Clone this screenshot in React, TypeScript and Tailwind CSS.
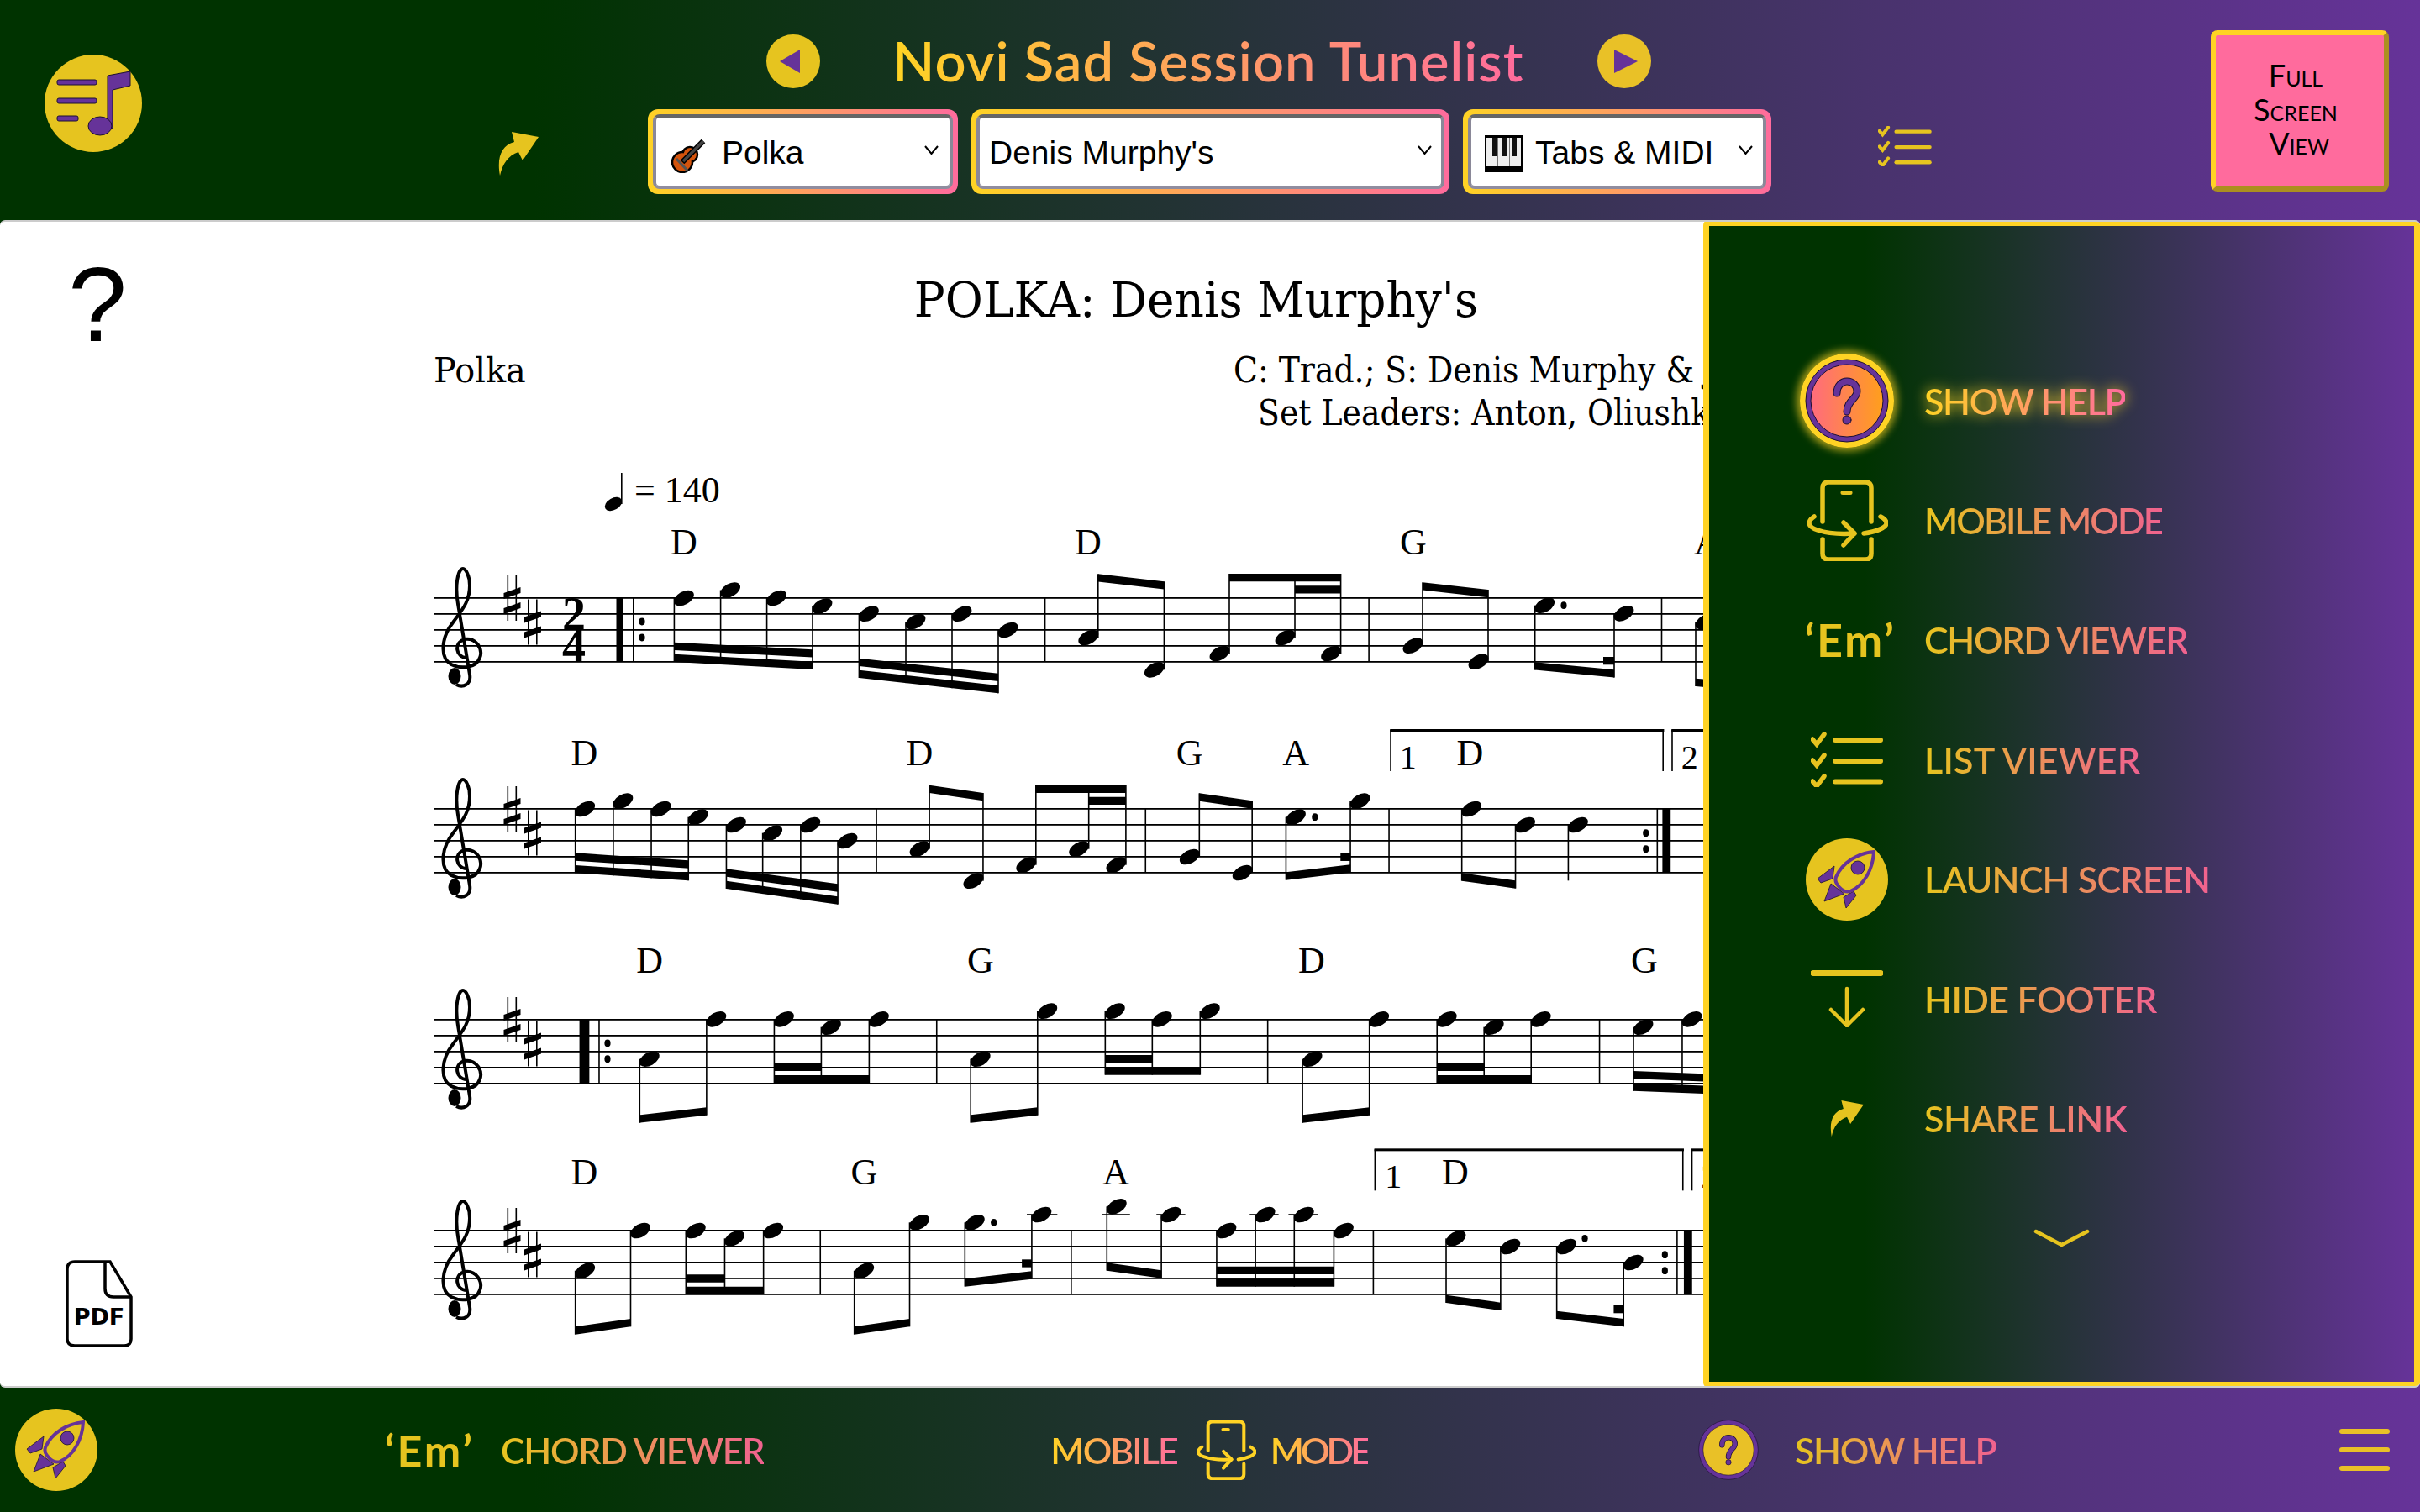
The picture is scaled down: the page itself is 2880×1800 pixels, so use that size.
import { ReactNode } from 'react';

type Group = { up?: boolean; notes: number[][]; beams: number[][]; end?: number };
type Staff = {
  ox: number;
  oy: number;
  sx: number;
  sy: number;
  top: number;
  chordY: number;
  chords: [number, string][];
  bars: number[];
  thick: number[];
  dots: number[][];
  ledgers?: number[][];
  groups: Group[];
  volta?: { y: number; left: number; right: number; next: number; one: number; two: number };
};

const CROP_X = 1 / 1.018;
const CROP_Y = 1 / 3;
const BEAM = 9.3;

const staves: Staff[] = [
  {
    ox: 0, oy: 0, sx: 1, sy: 1, top: 712, chordY: 660,
    chords: [[814, 'D'], [1295, 'D'], [1682, 'G'], [2032, 'A']],
    bars: [753, 1242.8, 1628.3, 1976.7],
    thick: [733.5, 742],
    dots: [[764, 740], [764, 759], [1861, 720.7]],
    groups: [
      { notes: [[802.4, 712], [857.6, 702.5], [912.6, 712], [967, 721.5]], beams: [[802.4, 764.7, 967, 773.3], [802.4, 778.7, 967, 787.7]] },
      { notes: [[1022.4, 730.7], [1078, 740], [1133, 730.7], [1188, 750]], beams: [[1022.4, 783.7, 1188, 801.7], [1022.4, 797.7, 1188, 816]] },
      { up: true, notes: [[1306.8, 759], [1385.4, 797.3]], beams: [[1306.8, 683.3, 1385.4, 692.3]] },
      { up: true, notes: [[1463, 778], [1541, 759], [1595.6, 778]], beams: [[1463, 683, 1595.6, 683], [1541, 697.3, 1595.6, 697.3]] },
      { up: true, notes: [[1693, 768.7], [1771, 787.7]], beams: [[1693, 693.3, 1771, 702]] },
      { notes: [[1826.7, 720.7], [1921, 730.3]], beams: [[1908, 782, 1921, 782], [1826.7, 788.3, 1921, 797.3]] },
      { notes: [[2018, 740]], beams: [[2018, 807.7, 2100, 815]] },
    ],
  },
  {
    ox: 500, oy: 860, sx: CROP_X, sy: CROP_Y, top: 963, chordY: 152,
    chords: [[199, 'D'], [605, 'D'], [932, 'G'], [1061, 'A'], [1272, 'D']],
    bars: [552, 878, 1173, 1498],
    thick: [1505, 1515],
    dots: [[1485, 395], [1485, 452], [1084, 338]],
    volta: { y: 27, left: 1175, right: 1505, next: 1516, one: 1197, two: 1538 },
    groups: [
      { notes: [[188, 309], [234, 281], [280, 309], [325, 338]], beams: [[188, 466, 325, 493], [188, 510, 325, 537]] },
      { notes: [[371, 366], [415, 395], [461, 366], [506, 423]], beams: [[371, 523, 506, 577], [371, 566, 506, 622]] },
      { up: true, notes: [[617, 452], [682, 566]], beams: [[617, 224, 682, 252]] },
      { up: true, notes: [[746, 509], [810, 452], [855, 509]], beams: [[746, 224, 855, 224], [810, 266, 855, 266]] },
      { up: true, notes: [[944, 480], [1008, 537]], beams: [[944, 253, 1008, 280]] },
      { notes: [[1049, 338], [1127, 281]], beams: [[1115, 467, 1127, 467], [1049, 535, 1127, 508]] },
      { notes: [[1262, 309], [1327, 366]], beams: [[1262, 538, 1327, 565]] },
      { notes: [[1391, 366]], beams: [], end: 565 },
    ],
  },
  {
    ox: 500, oy: 1110, sx: CROP_X, sy: CROP_Y, top: 1214, chordY: 145,
    chords: [[278, 'D'], [679, 'G'], [1080, 'D'], [1483, 'G']],
    bars: [216, 625, 1026, 1428],
    thick: [193, 205],
    dots: [[227, 396], [227, 452]],
    groups: [
      { notes: [[266, 452], [347, 310]], beams: [[266, 652, 347, 625]] },
      { notes: [[429, 310], [486, 338], [544, 310]], beams: [[429, 467, 486, 467], [429, 510, 544, 510]] },
      { notes: [[667, 452], [748, 281]], beams: [[667, 652, 748, 625]] },
      { notes: [[830, 281], [887, 310], [945, 281]], beams: [[830, 438, 887, 438], [830, 481, 945, 481]] },
      { notes: [[1069, 452], [1150, 310]], beams: [[1069, 652, 1150, 625]] },
      { notes: [[1232, 310], [1289, 338], [1346, 310]], beams: [[1232, 467, 1289, 467], [1232, 510, 1346, 510]] },
      { notes: [[1470, 338], [1529, 310]], beams: [[1470, 495, 1600, 510], [1470, 538, 1600, 553]] },
    ],
  },
  {
    ox: 500, oy: 1360, sx: CROP_X, sy: CROP_Y, top: 1465, chordY: 150,
    chords: [[199, 'D'], [538, 'G'], [843, 'A'], [1254, 'D']],
    bars: [484, 788, 1154, 1522],
    thick: [1531, 1541],
    dots: [[1508, 401], [1508, 458], [695, 286], [1411, 343]],
    ledgers: [[735, 772, 258], [826, 860, 258], [892, 927, 258], [1005, 1040, 258], [1052, 1088, 258]],
    volta: { y: 25, left: 1156, right: 1529, next: 1540, one: 1179, two: 1562 },
    groups: [
      { notes: [[188, 458], [255, 315]], beams: [[188, 658, 255, 630]] },
      { notes: [[322, 315], [369, 343], [416, 315]], beams: [[322, 472, 369, 472], [322, 515, 416, 515]] },
      { notes: [[526, 458], [593, 286]], beams: [[526, 658, 593, 630]] },
      { notes: [[660, 286], [741, 258]], beams: [[729, 418, 741, 418], [660, 487, 741, 460]] },
      { notes: [[832, 229], [898, 258]], beams: [[832, 430, 898, 457]] },
      { notes: [[965, 315], [1012, 258], [1059, 258], [1107, 315]], beams: [[965, 443, 1107, 443], [965, 487, 1107, 487]] },
      { notes: [[1243, 343], [1309, 372]], beams: [[1243, 545, 1309, 572]] },
      { notes: [[1377, 372], [1458, 429]], beams: [[1446, 582, 1458, 582], [1377, 602, 1458, 630]] },
    ],
  },
];

function Clef({ x, y }: { x: number; y: number }) {
  return (
    <g transform={`translate(${x} ${y})`}>
      <path
        d="M4 14C-8 14-12-4 2-8C16-10 24 4 20 14C16 26-2 28-14 22C-28 14-26-10-12-28C-2-42 8-52 8-72C8-84 3-92 0-92C-6-92-10-72-6-50L8 34C10 46 0 50-8 46"
        fill="none"
        stroke="#000"
        strokeWidth="4"
      />
      <ellipse cx="-10" cy="36" rx="7.5" ry="10" />
    </g>
  );
}

function Sharp({ x, y }: { x: number; y: number }) {
  return (
    <g transform={`translate(${x} ${y})`}>
      <rect x="-6" y="-27" width="1.6" height="54" />
      <rect x="4" y="-27" width="1.6" height="54" />
      <polygon points="-10,-6 10,-13 10,-6 -10,1" />
      <polygon points="-10,12 10,5 10,12 -10,19" />
    </g>
  );
}

function StaffView({ staff }: { staff: Staff }) {
  const X = (n: number) => staff.ox + n * staff.sx;
  const Y = (n: number) => staff.oy + n * staff.sy;
  const { top, volta } = staff;

  return (
    <g>
      {[0, 1, 2, 3, 4].map((i) => (
        <rect key={i} x="516" y={top + i * 19 - 1} width="1520" height="1.8" />
      ))}
      <Clef x={551} y={top + 57} />
      <Sharp x={609.5} y={top} />
      <Sharp x={634} y={top + 28.5} />
      {staff.bars.map((b) => (
        <rect key={b} x={X(b)} y={top} width="1.6" height="76" />
      ))}
      <rect x={X(staff.thick[0])} y={top} width={X(staff.thick[1]) - X(staff.thick[0])} height="76" />
      {staff.dots.map(([x, y], i) => (
        <ellipse key={i} cx={X(x)} cy={Y(y)} rx="3.6" ry="4.4" />
      ))}
      {staff.ledgers?.map(([a, b, y], i) => (
        <rect key={i} x={X(a)} y={Y(y) - 0.8} width={X(b) - X(a)} height="1.6" />
      ))}
      {staff.groups.map((g, gi) => {
        const main = g.up ? g.beams[0] : g.beams[g.beams.length - 1];
        return (
          <g key={gi}>
            {g.beams.map(([x1, y1, x2, y2], i) => (
              <polygon
                key={i}
                points={`${X(x1)},${Y(y1)} ${X(x2)},${Y(y2)} ${X(x2)},${Y(y2) + BEAM} ${X(x1)},${Y(y1) + BEAM}`}
              />
            ))}
            {g.notes.map(([sx, hy], i) => {
              let end = g.end !== undefined ? Y(g.end) : 0;
              if (main) {
                const t = (sx - main[0]) / (main[2] - main[0]);
                end = Y(main[1] + (main[3] - main[1]) * t) + (g.up ? 0 : BEAM);
              }
              const head = Y(hy);
              const hx = X(sx) + (g.up ? -11.5 : 11.5);
              return (
                <g key={i}>
                  <rect x={X(sx) - 0.8} y={Math.min(head, end)} width="1.6" height={Math.abs(end - head)} />
                  <ellipse cx={hx} cy={head} rx="13" ry="7.8" transform={`rotate(-30 ${hx} ${head})`} />
                </g>
              );
            })}
          </g>
        );
      })}
      {staff.chords.map(([x, c], i) => (
        <text key={i} x={X(x)} y={Y(staff.chordY)} textAnchor="middle" fontSize="44">
          {c}
        </text>
      ))}
      {volta && (
        <g>
          <rect x={X(volta.left)} y={Y(volta.y) - 1} width={X(volta.right) - X(volta.left) + 2} height="3" />
          <rect x={X(volta.left)} y={Y(volta.y)} width="1.6" height="49" />
          <rect x={X(volta.right)} y={Y(volta.y)} width="1.6" height="49" />
          <rect x={X(volta.next)} y={Y(volta.y) - 1} width="60" height="3" />
          <rect x={X(volta.next)} y={Y(volta.y)} width="1.6" height="49" />
          <text x={X(volta.one)} y={Y(volta.y) + 46} textAnchor="middle" fontSize="40">1</text>
          <text x={X(volta.two)} y={Y(volta.y) + 46} textAnchor="middle" fontSize="40">2</text>
        </g>
      )}
    </g>
  );
}

function Grad({ children, bright }: { children: ReactNode; bright?: boolean }) {
  return (
    <span
      className={
        bright
          ? 'bg-linear-to-r/srgb from-[#ffd324] to-[#ff6b9d] bg-clip-text text-transparent'
          : 'bg-linear-to-r/srgb from-[#e6c41f] to-[#f0628f] bg-clip-text text-transparent'
      }
    >
      {children}
    </span>
  );
}

function Logo() {
  return (
    <svg viewBox="0 0 116 116" className="w-[116px] h-[116px]">
      <circle cx="58" cy="58" r="58" fill="#e6c41f" />
      <g fill="#663399" stroke="#1d1033" strokeWidth="1">
        <rect x="15" y="30" width="47" height="6" rx="2" />
        <rect x="15" y="52" width="47" height="6" rx="2" />
        <rect x="15" y="73" width="25" height="6" rx="2" />
        <path d="M75 25L102 20V37L81 42V88H75Z" />
        <ellipse cx="66" cy="85" rx="14" ry="11" />
      </g>
    </svg>
  );
}

function ShareIcon({ className }: { className: string }) {
  return (
    <svg viewBox="0 0 48 52" className={className}>
      <path d="M2 52C-2 30 4 16 19 12L16 0L48 6L29 34L24 24C12 28 5 38 2 52Z" fill="#e6c41f" />
    </svg>
  );
}

function ListIcon({ className }: { className: string }) {
  return (
    <svg viewBox="0 0 86 65" className={className} fill="none" stroke="#e6c41f">
      <g strokeWidth="5.5" strokeLinecap="round">
        <path d="M2 8L7 14L16 2" />
        <path d="M2 33L7 39L16 27" />
        <path d="M2 58L7 64L16 52" />
      </g>
      <g strokeWidth="6" strokeLinecap="round">
        <path d="M29 9H83" />
        <path d="M29 34H83" />
        <path d="M29 58.500H83" />
      </g>
    </svg>
  );
}

function MobileIcon({ className, color }: { className: string; color: string }) {
  return (
    <svg viewBox="0 0 98 97" className={className} fill="none" stroke={color} strokeWidth="5.500" strokeLinecap="round" strokeLinejoin="round">
      <path d="M20 50V10Q20 3 27 3H71Q78 3 78 10V50" />
      <path d="M44 15.500H53" strokeWidth="5" />
      <path d="M10 44C1 50 2 56 14 60C26 64 44 65 58 64" />
      <path d="M45 51L58 64L45 78" />
      <path d="M69 64C84 62 96 57 96 52C96 49 93 46 89 44" />
      <path d="M20 71V88Q20 95 27 95H71Q78 95 78 88V71" />
    </svg>
  );
}

function RocketIcon({ className }: { className: string }) {
  return (
    <svg viewBox="0 0 98 98" className={className}>
      <circle cx="49" cy="49" r="49" fill="#e6c41f" />
      <g stroke="#1d1033" strokeWidth="0.8" strokeLinejoin="round">
        <path d="M34 33L14 48L18 53L32 48C33 43 33 38 34 33Z" fill="#663399" />
        <path d="M30 54L22 75L46 66Z" fill="#663399" />
        <path d="M57 63L60 68L48 83L45 70Z" fill="#663399" />
      </g>
      <path d="M81 16C62 18 44 28 36 46C33 54 45 66 53 63C70 56 80 36 81 16Z" fill="#e6c41f" stroke="#663399" strokeWidth="4" />
      <circle cx="62" cy="35" r="8" fill="#663399" stroke="#1d1033" strokeWidth="0.8" />
    </svg>
  );
}

function QuestionGlyph({ color, line, width }: { color: string; line: string; width: number }) {
  return (
    <g fill="none" strokeLinecap="round">
      <path d="M44 47C44 38 50 33 56 33C63 33 68 38 68 45C68 54 56 56 56 69" stroke={line} strokeWidth={width + 2} />
      <path d="M44 47C44 38 50 33 56 33C63 33 68 38 68 45C68 54 56 56 56 69" stroke={color} strokeWidth={width} />
      <circle cx="56" cy="79" r="5" fill={color} stroke={line} strokeWidth="1" />
    </g>
  );
}

function HelpBig() {
  return (
    <div className="w-[112px] h-[112px] rounded-full shadow-[0_0_10px_4px_rgba(255,211,36,0.65)]">
      <svg viewBox="0 0 112 112" className="w-full h-full">
        <defs>
          <linearGradient id="helpFill" x1="0" x2="1" y1="0" y2="0">
            <stop offset="0" stopColor="#ff6b7d" />
            <stop offset="1" stopColor="#ff9f1c" />
          </linearGradient>
        </defs>
        <circle cx="56" cy="56" r="56" fill="#ffd324" />
        <circle cx="56" cy="56" r="49" fill="#663399" stroke="#1d1033" strokeWidth="1" />
        <circle cx="56" cy="56" r="43" fill="url(#helpFill)" stroke="#1d1033" strokeWidth="1" />
        <QuestionGlyph color="#663399" line="#1d1033" width={7} />
      </svg>
    </div>
  );
}

function HelpSmall() {
  return (
    <svg viewBox="0 0 112 112" className="w-[72px] h-[72px]">
      <circle cx="56" cy="56" r="55" fill="#663399" stroke="#1d1033" strokeWidth="1" />
      <circle cx="56" cy="56" r="47" fill="#e9c127" stroke="#1d1033" strokeWidth="1" />
      <QuestionGlyph color="#663399" line="#1d1033" width={8} />
    </svg>
  );
}

function HideIcon() {
  return (
    <svg viewBox="0 0 86 68" className="w-[86px] h-[68px]" fill="none" stroke="#e6c41f" strokeLinecap="round" strokeLinejoin="round">
      <path d="M3 3.500H83" strokeWidth="7" />
      <path d="M43 22V66" strokeWidth="4.500" />
      <path d="M24 47L43 66L62 47" strokeWidth="4.500" />
    </svg>
  );
}

function ViolinIcon() {
  return (
    <svg viewBox="0 0 44 44" className="w-[44px] h-[44px]">
      <g fill="#d4540d" stroke="#000" strokeWidth="2.500">
        <circle cx="22" cy="22" r="9" />
        <circle cx="13" cy="31" r="12" />
      </g>
      <circle cx="22" cy="22" r="7.500" fill="#d4540d" />
      <path d="M6 27L19 41" stroke="#555" strokeWidth="3" />
      <path d="M38 6L13 31" stroke="#000" strokeWidth="6.500" />
      <path d="M38 6L14 30" stroke="#444" strokeWidth="3.500" />
    </svg>
  );
}

function PianoIcon() {
  return (
    <svg viewBox="0 0 45 44" className="w-[45px] h-[44px]">
      <rect x="0" y="0" width="45" height="44" fill="#000" />
      <rect x="2" y="3" width="41" height="34" fill="#eee" />
      <g fill="#777">
        <rect x="15" y="3" width="1" height="34" />
        <rect x="29" y="3" width="1" height="34" />
      </g>
      <g fill="#111">
        <rect x="9" y="3" width="6" height="22" />
        <rect x="20" y="3" width="6" height="22" />
        <rect x="32" y="3" width="6" height="22" />
      </g>
    </svg>
  );
}

function PickerBox({ width, arrow, children }: { width: string; arrow: string; children: ReactNode }) {
  return (
    <div className={`relative rounded-xl bg-linear-to-r/srgb from-[#ffd324] to-[#ff6b9d] p-[6px] ${width}`}>
      {children}
      <svg viewBox="0 0 19 11" className={`absolute top-[43px] w-[19px] h-[11px] pointer-events-none ${arrow}`} fill="none" stroke="#000" strokeWidth="2">
        <path d="M2 1L9.500 10L17 1" />
      </svg>
    </div>
  );
}

const selectClass =
  "block w-full h-[89px] appearance-none rounded-lg bg-white text-black text-[39px] pt-[4px] border-[4px] border-solid border-t-[#666] border-b-[#908d9f] border-x-[#8a8898] font-['Liberation_Sans',sans-serif]";

const menu = [
  { label: 'MOBILE MODE', cls: 'tracking-[-2px]', icon: <MobileIcon className="w-[98px] h-[97px]" color="#e6c41f" /> },
  { label: 'CHORD VIEWER', cls: 'tracking-[-1.300px]', icon: <span className="ml-[8px] text-[54px] leading-none text-[#e6c41f] font-bold tracking-[2.500px]">‘Em’</span> },
  { label: 'LIST VIEWER', cls: 'tracking-[0.200px]', icon: <ListIcon className="w-[86px] h-[65px]" /> },
  { label: 'LAUNCH SCREEN', cls: 'tracking-[-0.750px]', icon: <RocketIcon className="w-[98px] h-[98px]" /> },
  { label: 'HIDE FOOTER', cls: 'tracking-[-0.600px]', icon: <HideIcon /> },
  { label: 'SHARE LINK', cls: 'tracking-[-0.400px]', icon: <ShareIcon className="w-[40px] h-[43px]" /> },
];

export default function App() {
  return (
    <div className="w-[2880px] h-[1800px] overflow-hidden flex flex-col bg-linear-to-r/srgb from-[#003300] from-22% to-[#663399] font-['Lato',sans-serif]">
      {/* Header */}
      <header className="h-[262px] shrink-0 flex items-start">
        <div className="w-[577px] shrink-0 pl-[53px] pt-[65px]">
          <Logo />
        </div>
        <div className="w-[1722px] shrink-0 pt-[41px] flex flex-col">
          <div className="h-[64px] flex items-center justify-center gap-[87px]">
            <button className="w-[64px] h-[64px] rounded-full bg-[#e6c41f] flex items-center justify-center">
              <svg viewBox="0 0 24 28" className="w-[24px] h-[28px] -ml-[8px]">
                <polygon points="0,14 24,0 24,28" fill="#663399" />
              </svg>
            </button>
            <h1 className="text-[65px] leading-none font-semibold tracking-[1px] -mt-[2px]">
              <Grad bright>Novi Sad Session Tunelist</Grad>
            </h1>
            <button className="w-[64px] h-[64px] rounded-full bg-[#e9c127] flex items-center justify-center">
              <svg viewBox="0 0 28 28" className="w-[28px] h-[28px] ml-[5px]">
                <polygon points="0,0 28,14 0,28" fill="#663399" />
              </svg>
            </button>
          </div>
          <div className="mt-[25px] flex items-center">
            <div className="w-[64px] flex justify-end mt-[4px]">
              <ShareIcon className="w-[48px] h-[52px]" />
            </div>
            <div className="ml-[130px] flex gap-[16px]">
              <PickerBox width="w-[369px]" arrow="right-[22px]">
                <select className={`${selectClass} pl-[78px]`} defaultValue="Polka">
                  <option>Polka</option>
                </select>
                <div className="absolute left-[28px] top-[32px]">
                  <ViolinIcon />
                </div>
              </PickerBox>
              <PickerBox width="w-[569px]" arrow="right-[20px]">
                <select className={`${selectClass} pl-[11px]`} defaultValue="Denis Murphy's">
                  <option>Denis Murphy's</option>
                </select>
              </PickerBox>
              <PickerBox width="w-[367px]" arrow="right-[21px]">
                <select className={`${selectClass} pl-[76px]`} defaultValue="Tabs & MIDI">
                  <option>Tabs &amp; MIDI</option>
                </select>
                <div className="absolute left-[26px] top-[31px]">
                  <PianoIcon />
                </div>
              </PickerBox>
            </div>
            <div className="ml-[127px] mt-[-14px]">
              <ListIcon className="w-[64px] h-[48px]" />
            </div>
          </div>
        </div>
        <div className="flex-1 flex justify-end pr-[37px] pt-[36px]">
          <button className="w-[212px] h-[192px] pb-[4px] rounded-lg border-[6px] border-solid border-t-[#ffd324] border-l-[#ffd324] border-b-[#ab8f1f] border-r-[#ab8f1f] bg-[#ff6b9d] text-black text-[36px] leading-[40.500px] [font-variant:small-caps] pr-[10px]">
            Full
            <br />
            Screen
            <br />
            <span className="ml-[8px]">View</span>
          </button>
        </div>
      </header>

      {/* Sheet */}
      <main className="relative h-[1390px] shrink-0 bg-white rounded-[6px] border-y-2 border-[#ccc] flex overflow-hidden">
        <div className="w-[200px] shrink-0 flex flex-col justify-between pl-[78px] pb-[46px]">
          <div className="text-[126px] leading-none mt-[36px] ml-[3px] font-['Liberation_Sans',sans-serif] text-black">?</div>
          <svg viewBox="0 0 80 104" className="w-[80px] h-[104px]">
            <path
              d="M11 2H53L78 44V94Q78 102 70 102H11Q2 102 2 94V11Q2 2 11 2Z"
              fill="#fff"
              stroke="#000"
              strokeWidth="3.500"
            />
            <path d="M47 2V34Q47 44 57 44H78" fill="none" stroke="#000" strokeWidth="3.500" />
            <text x="40" y="77" textAnchor="middle" fontSize="27" fontWeight="700" fontFamily="DejaVu Sans, sans-serif">
              PDF
            </text>
          </svg>
        </div>
        <svg
          viewBox="200 264 2680 1386"
          className="w-[2680px] h-[1386px] shrink-0 font-['Liberation_Serif',serif]"
          fill="#000"
        >
          <g className="font-['DejaVu_Serif',serif]">
            <text transform="translate(1423.500 377) scale(0.948 1)" textAnchor="middle" fontSize="58">
              POLKA: Denis Murphy's
            </text>
            <text transform="translate(516 455) scale(0.96 1)" fontSize="41.500">
              Polka
            </text>
            <text transform="translate(1468 455) scale(0.9 1)" fontSize="42">
              C: Trad.; S: Denis Murphy &amp; Jack
            </text>
            <text transform="translate(1497 506) scale(0.9 1)" fontSize="42">
              Set Leaders: Anton, Oliushka
            </text>
          </g>
          <ellipse cx="730" cy="600" rx="11" ry="7" transform="rotate(-30 730 600)" />
          <rect x="739" y="563" width="1.600" height="37" />
          <text x="755" y="598" fontSize="44">
            = 140
          </text>
          <text x="683" y="750" textAnchor="middle" fontSize="56" fontWeight="700">
            2
          </text>
          <text x="683" y="788" textAnchor="middle" fontSize="56" fontWeight="700">
            4
          </text>
          {staves.map((s) => (
            <StaffView key={s.top} staff={s} />
          ))}
        </svg>

        {/* Side menu */}
        <aside className="absolute right-0 top-[-2px] bottom-[-2px] w-[853px] rounded-[6px] border-[7px] border-[#ffd324] bg-linear-to-r/srgb from-[#003300] from-22% to-[#663399] pt-[137px] pl-[100px] font-semibold">
          <div className="h-[142.400px] flex items-center gap-[28px]">
            <div className="w-[128px] flex justify-center">
              <HelpBig />
            </div>
            <span className="text-[43px] leading-none tracking-[-1.400px] drop-shadow-[0_0_8px_#ffd324]">
              <Grad bright>SHOW HELP</Grad>
            </span>
          </div>
          {menu.map((m) => (
            <div key={m.label} className="h-[142.400px] flex items-center gap-[28px]">
              <div className="w-[128px] flex justify-center">{m.icon}</div>
              <span className={`text-[43px] leading-none ${m.cls}`}>
                <Grad>{m.label}</Grad>
              </span>
            </div>
          ))}
          <div className="mt-[60px] -ml-[100px] flex justify-center">
            <svg viewBox="0 0 67 22" className="w-[67px] h-[22px]" fill="none" stroke="#e6c41f" strokeWidth="4.500" strokeLinecap="round">
              <path d="M3 3L33.500 19L64 3" />
            </svg>
          </div>
        </aside>
      </main>

      {/* Footer */}
      <footer className="h-[148px] shrink-0 flex items-center pl-[18px] pr-[36px] font-semibold">
        <RocketIcon className="w-[98px] h-[98px] shrink-0" />
        <div className="ml-[342px] flex items-center gap-[29px]">
          <span className="w-[109px] text-[52px] leading-none text-[#e6c41f] font-bold tracking-[3px] whitespace-nowrap">‘Em’</span>
          <span className="text-[43px] leading-none tracking-[-1.300px]">
            <Grad>CHORD VIEWER</Grad>
          </span>
        </div>
        <div className="ml-[341px] flex items-center">
          <span className="text-[43px] leading-none tracking-[-2px]">
            <Grad bright>MOBILE</Grad>
          </span>
          <MobileIcon className="ml-[22px] w-[72px] h-[72px]" color="#ffd324" />
          <span className="ml-[17px] text-[43px] leading-none tracking-[-4px]">
            <Grad bright>MODE</Grad>
          </span>
        </div>
        <div className="ml-[393px] flex items-center gap-[43px]">
          <HelpSmall />
          <span className="text-[43px] leading-none tracking-[-1.400px]">
            <Grad>SHOW HELP</Grad>
          </span>
        </div>
        <div className="ml-auto flex flex-col gap-[16px]">
          <div className="w-[60px] h-[6px] rounded-full bg-[#e9c127]" />
          <div className="w-[60px] h-[6px] rounded-full bg-[#e9c127]" />
          <div className="w-[60px] h-[6px] rounded-full bg-[#e9c127]" />
        </div>
      </footer>
    </div>
  );
}
